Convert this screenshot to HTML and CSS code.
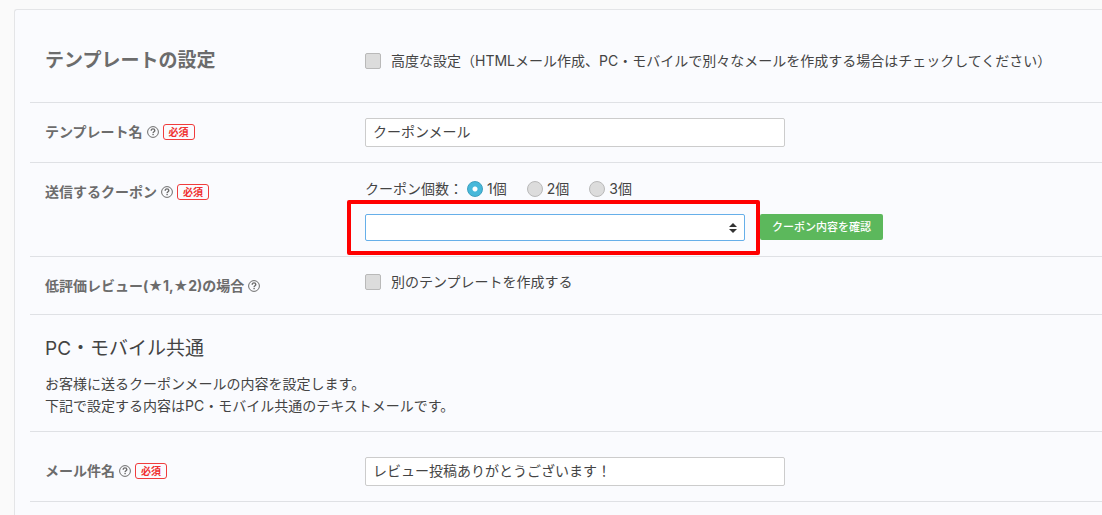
FILE: index.html
```html
<!DOCTYPE html>
<html lang="ja">
<head>
    <meta charset="UTF-8">
    <meta name="viewport" content="width=device-width, initial-scale=1.0">
    <title>テンプレートの設定</title>
    <link rel="stylesheet" href="styles.css">
</head>
<body>

    <svg class="defs" width="0" height="0" aria-hidden="true">
        <symbol id="help" viewBox="0 0 12 12">
            <circle cx="6" cy="6" r="5.4" fill="none" stroke="currentColor" stroke-width="1"/>
            <path d="M4.2 4.7C4.2 3.5 5 2.9 6 2.9S7.8 3.5 7.8 4.5C7.8 5.7 6.1 5.7 6.1 7" fill="none" stroke="currentColor" stroke-width="1.4"/>
            <rect x="5.4" y="7.8" width="1.4" height="1.4" fill="currentColor"/>
        </symbol>
    </svg>

    <form class="panel">
        <div class="row rowHead">
            <h2 class="title">テンプレートの設定</h2>
            <label class="check"><input type="checkbox">高度な設定（HTMLメール作成、PC・モバイルで別々なメールを作成する場合はチェックしてください）</label>
        </div>

        <div class="row">
            <div class="name">
                <label for="templateName">テンプレート名</label>
                <svg class="help"><use href="#help"/></svg>
                <span class="required">必須</span>
            </div>
            <input class="text" type="text" id="templateName" value="クーポンメール">
        </div>

        <div class="row">
            <div class="name">
                <label for="coupon">送信するクーポン</label>
                <svg class="help"><use href="#help"/></svg>
                <span class="required">必須</span>
            </div>
            <div>
                <div class="counts" role="radiogroup" aria-labelledby="countLabel">
                    <span id="countLabel">クーポン個数：</span>
                    <label class="count"><input type="radio" name="count" checked>1個</label>
                    <label class="count"><input type="radio" name="count">2個</label>
                    <label class="count"><input type="radio" name="count">3個</label>
                </div>
                <div class="couponLine">
                    <div class="selectBox">
                        <select id="coupon"><option></option></select>
                        <svg class="arrows" viewBox="0 0 8 10"><path d="M4 0L8 4H0ZM0 6H8L4 10Z" fill="#333"/></svg>
                    </div>
                    <button class="confirm" type="button">クーポン内容を確認</button>
                </div>
            </div>
        </div>

        <div class="row rowReview">
            <div class="name">
                <label for="lowReview">低評価レビュー(★1,★2)の場合</label>
                <svg class="help"><use href="#help"/></svg>
            </div>
            <label class="check"><input type="checkbox" id="lowReview">別のテンプレートを作成する</label>
        </div>

        <div class="section">
            <h3 class="subtitle">PC・モバイル共通</h3>
            <p>お客様に送るクーポンメールの内容を設定します。<br>下記で設定する内容はPC・モバイル共通のテキストメールです。</p>
        </div>

        <div class="row rowSubject">
            <div class="name">
                <label for="subject">メール件名</label>
                <svg class="help"><use href="#help"/></svg>
                <span class="required">必須</span>
            </div>
            <input class="text" type="text" id="subject" value="レビュー投稿ありがとうございます！">
        </div>
    </form>

</body>
</html>
```

FILE: styles.css
```css
*{
    box-sizing: border-box;
}

body{
    margin: 0;
    padding: 9px 0 0 14px;
    background-color: #fafafa;
    color: #444;
    font-family: Inter, "Noto Sans CJK JP", sans-serif;
    font-size: 14px;
    line-height: 22px;
}

input, select, button{
    font: inherit;
    color: inherit;
    margin: 0;
}

.defs{
    position: absolute;
}

.panel{
    background-color: #fafbfe;
    border: 1px solid #e4e5e7;
    border-width: 1px 0 0 1px;
    border-radius: 3px 0 0 0;
    padding-left: 15px;
    min-height: calc(100vh - 9px);
}

.row{
    display: grid;
    grid-template-columns: 320px minmax(0, 1fr);
    align-items: start;
    padding: 15px;
    border-bottom: 1px solid #dfe1e5;
}

.rowHead{
    align-items: center;
    padding: 35px 15px 25px;
}

.title{
    margin: 0;
    font-size: 19px;
    line-height: 32px;
    font-weight: 700;
    color: #6c6c6c;
}

.name{
    display: flex;
    align-items: center;
    padding-top: 3px;
    font-weight: 700;
    color: #6c6c6c;
}

.help{
    width: 12px;
    height: 12px;
    margin-left: 4px;
}

.required{
    margin-left: 4px;
    width: 32px;
    height: 16px;
    border: 1px solid #f03c3c;
    border-radius: 3px;
    font-size: 10px;
    line-height: 14px;
    text-align: center;
    color: #f03030;
}

.check{
    display: flex;
    align-items: center;
    gap: 10px;
}

input[type="checkbox"], input[type="radio"]{
    appearance: none;
    flex: none;
    width: 16px;
    height: 16px;
    background-color: #dcdcdc;
    border: 1px solid #b9b9b9;
    border-radius: 2px;
}

input[type="radio"]{
    border-radius: 50%;
}

input[type="radio"]:checked{
    border-color: #3a9fbe;
    background: radial-gradient(circle, #fff 0, #fff 2px, #46b8da 3px);
}

.text{
    width: 100%;
    max-width: 420px;
    height: 29px;
    padding: 0 7px 3px;
    background-color: #fff;
    border: 1px solid #ccc;
    border-radius: 2px;
}

.counts{
    display: flex;
    align-items: center;
}

.count{
    display: flex;
    align-items: center;
    gap: 4px;
    margin-right: 20px;
}

#countLabel{
    margin-right: 4px;
}

.couponLine{
    display: flex;
    align-items: flex-start;
    gap: 15px;
    margin-top: 14px;
}

.selectBox{
    position: relative;
    width: 380px;
}

/* highlight frame around the select */
.selectBox::before{
    content: "";
    position: absolute;
    inset: -14px -15px -14px -18px;
    border: 4px solid #f00;
    border-radius: 2px;
    pointer-events: none;
}

.selectBox select{
    display: block;
    appearance: none;
    width: 100%;
    height: 27px;
    padding: 0 24px 0 8px;
    background-color: #fff;
    border: 1px solid #66afe9;
    border-radius: 2px;
}

.arrows{
    position: absolute;
    right: 8px;
    top: 9px;
    width: 8px;
    height: 10px;
    pointer-events: none;
}

.confirm{
    height: 26px;
    padding: 0 12px;
    background-color: #5cb85c;
    border: 0;
    border-radius: 2px;
    color: #fff;
    font-size: 11px;
    line-height: 22px;
    font-weight: 500;
}

.rowReview{
    padding-top: 14px;
    padding-bottom: 17px;
}

.rowReview .name{
    padding-top: 4px;
}

.section{
    padding: 20px 15px 14px;
    border-bottom: 1px solid #dfe1e5;
}

.subtitle{
    margin: 0 0 10px;
    font-size: 19px;
    line-height: 28px;
    font-weight: 400;
}

.section p{
    margin: 0;
}

.rowSubject{
    padding-top: 25px;
}
```
